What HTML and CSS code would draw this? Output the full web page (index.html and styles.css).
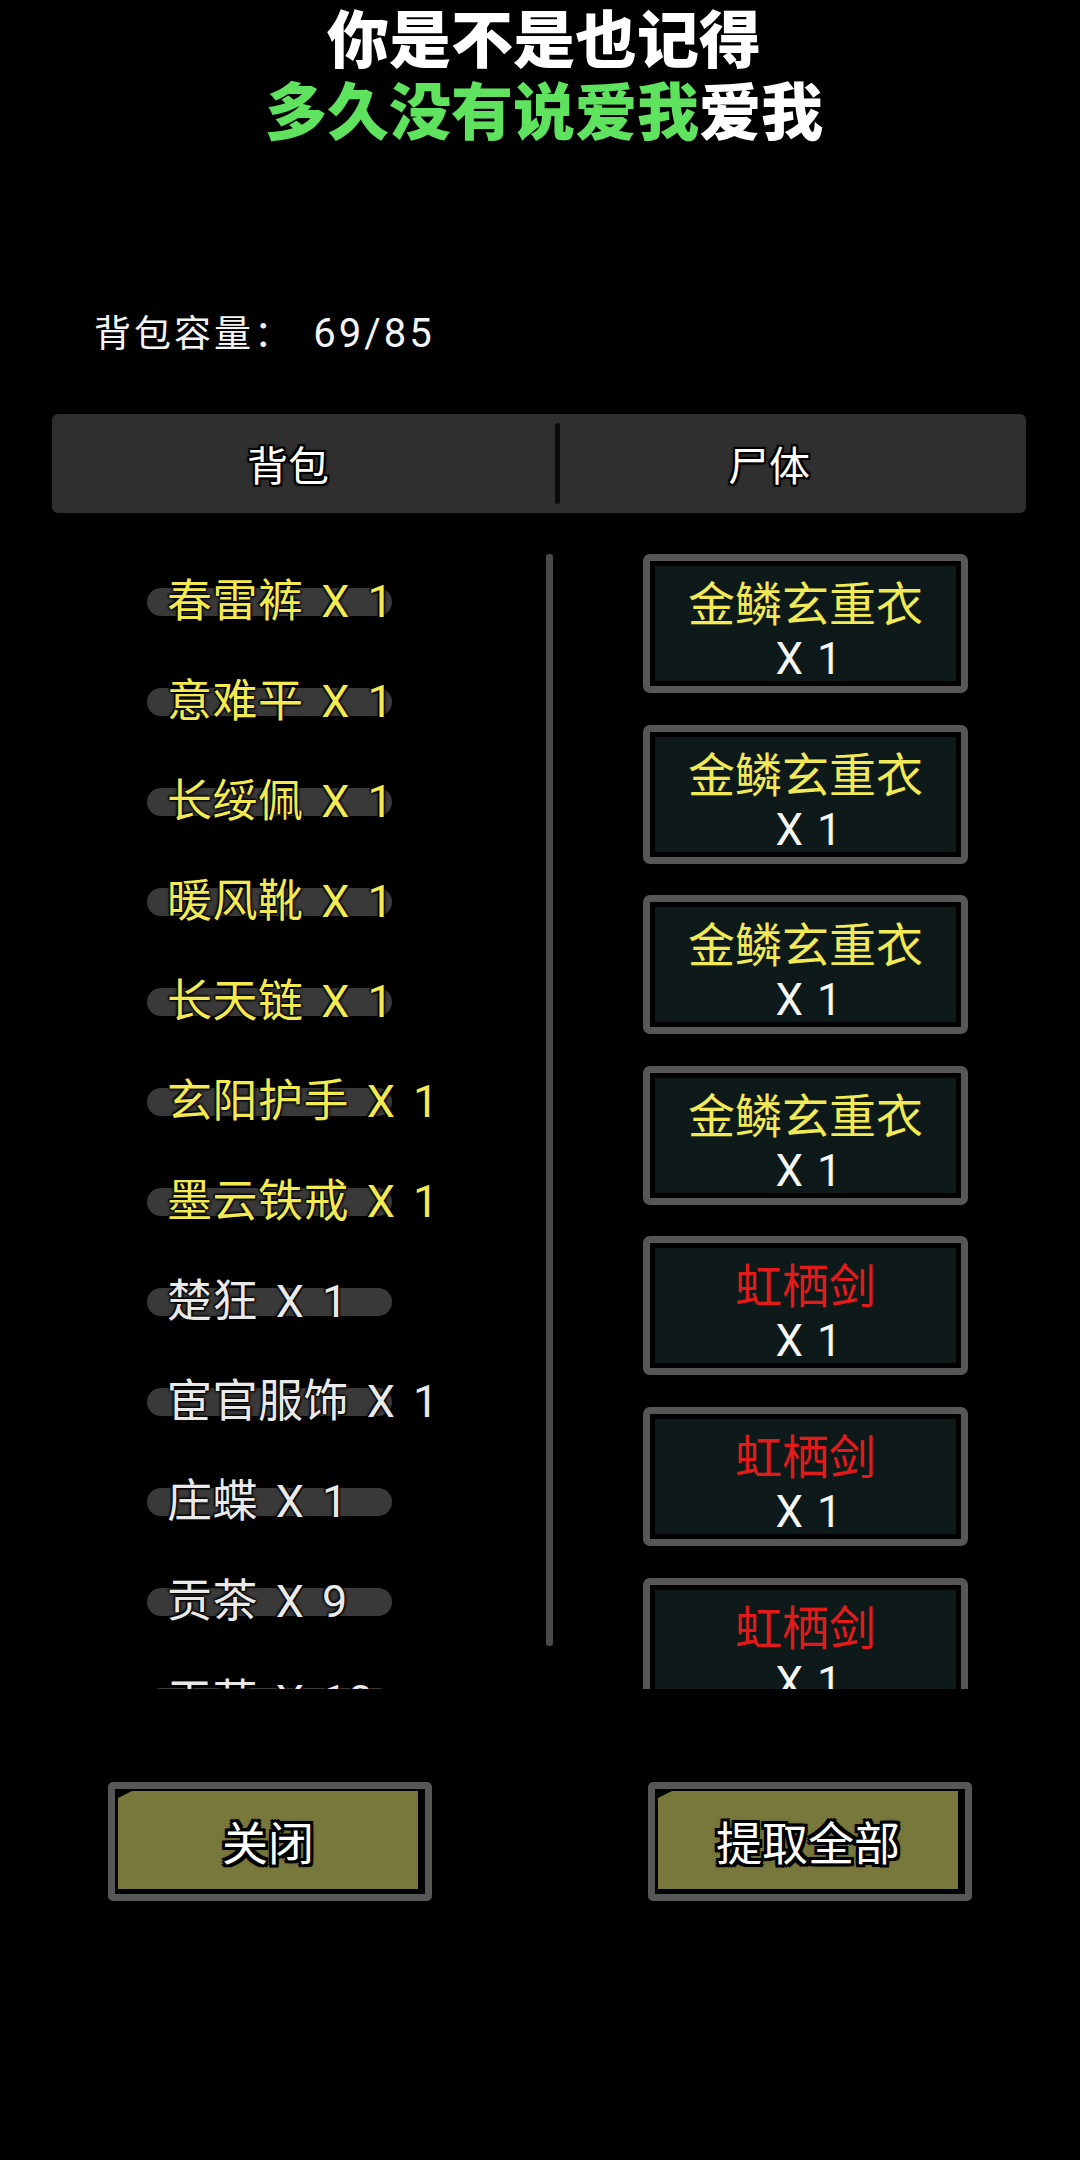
FILE: index.html
```html
<!DOCTYPE html>
<html lang="zh">
<head>
<meta charset="utf-8">
<title>背包</title>
<link rel="stylesheet" href="styles.css">
</head>
<body>
<div class="screen">
  <div class="title">
    <div class="line">你是不是也记得</div>
    <div class="line"><span class="green">多久没有说爱我</span>爱我</div>
  </div>

  <div class="capacity">背包容量： <span class="num">69/85</span></div>

  <div class="tabs">
    <div class="tab tab-left">背包</div>
    <div class="tab-divider"></div>
    <div class="tab tab-right">尸体</div>
  </div>

  <div class="content">
    <div class="bag-list">
      <div class="row"><div class="pill yellow">春雷裤 X 1</div></div>
      <div class="row"><div class="pill yellow">意难平 X 1</div></div>
      <div class="row"><div class="pill yellow">长绥佩 X 1</div></div>
      <div class="row"><div class="pill yellow">暖风靴 X 1</div></div>
      <div class="row"><div class="pill yellow">长天链 X 1</div></div>
      <div class="row"><div class="pill yellow">玄阳护手 X 1</div></div>
      <div class="row"><div class="pill yellow">墨云铁戒 X 1</div></div>
      <div class="row"><div class="pill white">楚狂 X 1</div></div>
      <div class="row"><div class="pill white">宦官服饰 X 1</div></div>
      <div class="row"><div class="pill white">庄蝶 X 1</div></div>
      <div class="row"><div class="pill white">贡茶 X 9</div></div>
      <div class="row"><div class="pill white">干草 X 10</div></div>
    </div>
    <div class="scrollbar"></div>
    <div class="corpse-list">
      <div class="card"><div class="card-inner"><div class="name yellow-t">金鳞玄重衣</div><div class="qty">X 1</div></div></div>
      <div class="card"><div class="card-inner"><div class="name yellow-t">金鳞玄重衣</div><div class="qty">X 1</div></div></div>
      <div class="card"><div class="card-inner"><div class="name yellow-t">金鳞玄重衣</div><div class="qty">X 1</div></div></div>
      <div class="card"><div class="card-inner"><div class="name yellow-t">金鳞玄重衣</div><div class="qty">X 1</div></div></div>
      <div class="card"><div class="card-inner"><div class="name red-t">虹栖剑</div><div class="qty">X 1</div></div></div>
      <div class="card"><div class="card-inner"><div class="name red-t">虹栖剑</div><div class="qty">X 1</div></div></div>
      <div class="card"><div class="card-inner"><div class="name red-t">虹栖剑</div><div class="qty">X 1</div></div></div>
    </div>
  </div>

  <div class="buttons">
    <div class="btn"><div class="btn-fill">关闭</div></div>
    <div class="btn"><div class="btn-fill">提取全部</div></div>
  </div>
</div>
</body>
</html>
```

FILE: styles.css
```css
html, body {
  margin: 0;
  padding: 0;
  background: #000;
}

.screen {
  width: 1080px;
  height: 2160px;
  overflow: hidden;
  background: #000;
  font-family: Roboto, "Noto Sans CJK SC", sans-serif;
  color: #fff;
}

.title {
  padding-left: 8px;
  text-align: center;
  font-family: "Noto Sans CJK SC", sans-serif;
  font-size: 62px;
  font-weight: 900;
  line-height: 72px;
  color: #fff;
}

.title .green {
  color: #5fe35f;
}

.capacity {
  margin-top: 162px;
  padding-left: 94px;
  font-size: 37px;
  line-height: 50px;
  letter-spacing: 3px;
  color: #f4f4f4;
  font-family: "Noto Sans CJK SC", sans-serif;
}

.capacity .num {
  font-family: Roboto, sans-serif;
  font-size: 40px;
  letter-spacing: 3px;
  padding-left: 8px;
}

.tabs {
  margin: 55px 54px 0 52px;
  height: 99px;
  background: #2f2f2f;
  border-radius: 6px;
  display: flex;
  align-items: center;
}

.tab {
  font-family: "Noto Sans CJK SC", sans-serif;
  font-size: 41px;
  line-height: 99px;
  text-align: center;
  color: #fff;
  text-shadow: 2px 0 0 #000, -2px 0 0 #000, 0 2px 0 #000, 0 -2px 0 #000,
    2px 2px 0 #000, -2px -2px 0 #000, 2px -2px 0 #000, -2px 2px 0 #000, 0 0 4px #000;
}

.tab-left {
  width: 503px;
  padding-right: 31px;
  box-sizing: border-box;
}

.tab-right {
  flex: 1;
  padding-right: 48px;
  box-sizing: border-box;
}

.tab-divider {
  width: 5px;
  height: 81px;
  background: #0b0b0b;
  border-radius: 3px;
}

.content {
  margin-top: 39px;
  height: 1137px;
  overflow: hidden;
  display: flex;
  align-items: flex-start;
}

.bag-list {
  margin-left: 147px;
  width: 399px;
  font-family: Roboto, "Noto Sans CJK SC", sans-serif;
}

.row {
  height: 100px;
  display: flex;
  align-items: center;
}

.pill {
  width: 245px;
  height: 28px;
  border-radius: 14px;
  background: #393939;
  box-sizing: border-box;
  padding-left: 20px;
  font-size: 45px;
  line-height: 28px;
  white-space: nowrap;
  overflow: visible;
  letter-spacing: 0.5px;
  word-spacing: 6px;
}

.pill.yellow {
  color: #f3ea52;
  text-shadow: 0 0 3px #000, 0 0 3px #000, 1px 1px 2px #000, -1px -1px 2px #000;
}

.pill.white {
  color: #e9e9e9;
  text-shadow: 0 0 3px #000, 0 0 3px #000, 1px 1px 2px #000, -1px -1px 2px #000;
}

.scrollbar {
  margin-top: 2px;
  width: 7px;
  height: 1092px;
  background: #4a4a4a;
  border-radius: 3px;
}

.corpse-list {
  margin-left: 90px;
  width: 325px;
  padding-top: 2px;
}

.card {
  height: 139px;
  box-sizing: border-box;
  border: 7px solid #575757;
  border-radius: 7px;
  background: #000;
  padding: 5px;
  margin-bottom: 31.6px;
}

.card-inner {
  height: 100%;
  background: #0e1a1a;
  text-align: center;
  padding-top: 5px;
  box-sizing: border-box;
}

.name {
  font-family: "Noto Sans CJK SC", sans-serif;
  font-size: 47px;
  line-height: 60px;
}

.yellow-t {
  color: #f1e955;
}

.red-t {
  color: #e21a1a;
}

.qty {
  font-family: Roboto, sans-serif;
  font-size: 44px;
  line-height: 56px;
  color: #f6f6f6;
  padding-left: 6px;
  word-spacing: 3px;
}

.buttons {
  margin-top: 93px;
  padding-left: 108px;
  display: flex;
  gap: 216px;
}

.btn {
  width: 324px;
  height: 119px;
  box-sizing: border-box;
  border: 7px solid #575757;
  border-radius: 5px;
  background: #000;
  padding: 2px 7px 5px 3px;
}

.btn-fill {
  height: 100%;
  background: #78783c;
  clip-path: polygon(14px 0, 100% 0, 100% 100%, 0 100%, 0 7px);
  font-family: "Noto Sans CJK SC", sans-serif;
  font-size: 46px;
  line-height: 98px;
  text-align: center;
  color: #fff;
  text-shadow: 3px 0 0 #000, -3px 0 0 #000, 0 3px 0 #000, 0 -3px 0 #000,
    3px 3px 0 #000, -3px -3px 0 #000, 3px -3px 0 #000, -3px 3px 0 #000,
    0 0 5px #000;
}
```
